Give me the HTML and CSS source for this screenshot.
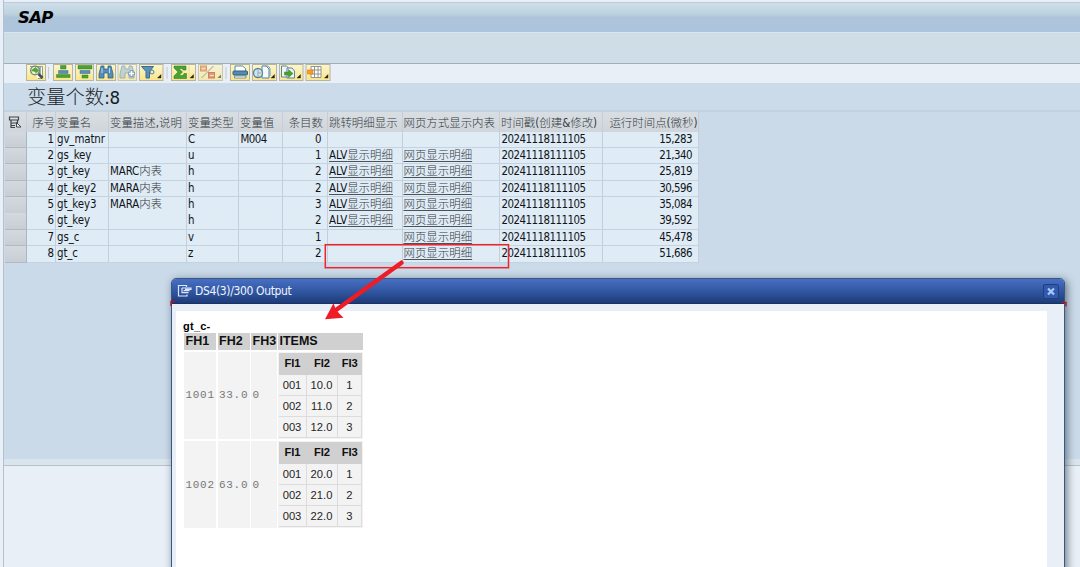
FILE: index.html
```html
<!DOCTYPE html>
<html lang="zh">
<head>
<meta charset="utf-8">
<title>SAP</title>
<link rel="stylesheet" href="styles.css">
</head>
<body>
<div class="window">
  <header class="titlebar">SAP</header>
  <div class="menubar"></div>
  <div class="toolbar">
    <svg class="icons" width="340" height="20" viewBox="0 64 340 20">
      <defs>
        <linearGradient id="btn" x1="0" y1="0" x2="0" y2="1"><stop offset="0" stop-color="#fbf6d0"/><stop offset="1" stop-color="#fae58a"/></linearGradient>
      </defs>
      <g fill="url(#btn)" stroke="#b9b49c" stroke-width="1">
        <rect x="26.5" y="64.5" width="19" height="16"/>
        <rect x="53.500" y="64.500" width="19" height="16"/>
        <rect x="75.500" y="64.500" width="18" height="16"/>
        <rect x="96.500" y="64.500" width="19" height="16"/>
        <rect x="118" y="64.500" width="18.500" height="16" opacity=".7"/>
        <rect x="139.500" y="64.500" width="23.500" height="16"/>
        <rect x="171.500" y="64.500" width="24" height="16"/>
        <rect x="198.500" y="64.500" width="24" height="16" opacity=".7"/>
        <rect x="230.500" y="64.500" width="19" height="16"/>
        <rect x="252.500" y="64.500" width="24" height="16"/>
        <rect x="279.500" y="64.500" width="23.500" height="16"/>
        <rect x="306" y="64.500" width="24" height="16"/>
      </g>
      <path d="M48.500 67v12M167 67v12M226 67v12" stroke="#c3cad0"/>
      <!-- details -->
      <path d="M30 66.500h12.500v12H38" fill="#f8fbf5" stroke="#8aa08c"/>
      <path d="M40 67v9" stroke="#9fb39c" stroke-width="2"/>
      <circle cx="35" cy="70.500" r="4.300" fill="#e8f3dc" stroke="#6d8078" stroke-width="1.300"/>
      <path d="M31.500 71c1-3 4-3 4-4l3.500 3.500-3.500 3.500v-2z" fill="#55a532"/>
      <path d="M38.500 74l4 4" stroke="#454e50" stroke-width="2.600"/>
      <!-- sort ascending and descending -->
      <path d="M60.500 65.500h5.500v3.500h-5.500zM56.500 74.500h13.500v3H56.500z" fill="#4ba22f" stroke="#34822a" stroke-width=".5"/>
      <path d="M58.500 70.500h9.500v3h-9.500z" fill="#5d8db2" stroke="#386d94" stroke-width=".5"/>
      <path d="M78 65.500h14v3.500H78zM82 75h6v3h-6z" fill="#4ba22f" stroke="#34822a" stroke-width=".5"/>
      <path d="M80 70.500h10v3H80z" fill="#5d8db2" stroke="#386d94" stroke-width=".5"/>
      <!-- find -->
      <path d="M101 66h3v3h4v-3h3l2 8v4h-5v-5h-4v5h-5v-4z" fill="#568db8" stroke="#2f658e" stroke-width=".8"/>
      <path d="M102 68v5M109.500 68v5" stroke="#b9d7e9"/>
      <g opacity=".55">
        <path d="M122 66h3v3h4v-3h3l2 8v4h-5v-5h-4v5h-5v-4z" fill="#9abdd5" stroke="#5684aa"/>
      </g>
      <path d="M131.500 70v7M128 73.500h7" stroke="#7fa3bf" stroke-width="3.500"/><path d="M131.500 71v5M129 73.500h5" stroke="#fff" stroke-width="1.500"/>
      <!-- filter -->
      <path d="M141.500 66.500h12l-4 5v6.500H146v-6.500z" fill="#5d91b8" stroke="#356b96"/>
      <circle cx="152" cy="72" r="2" fill="#f7edb0" stroke="#4f7fa5"/>
      <!-- total -->
      <path d="M174 66h12v4h-3l-1-1.500h-3l3.500 3.500-3.500 3.500h4l1-2h2.500v5H174v-2.500l4-4-4-4z" fill="#4ba22f" stroke="#34822a" stroke-width=".6"/>
      <!-- subtotal -->
      <path d="M201.500 78l12-12" stroke="#999d9a"/>
      <rect x="200.500" y="66" width="6" height="5" fill="#edb887" stroke="#d99c6c"/><rect x="208.500" y="72.500" width="6" height="5.500" fill="#e19978" stroke="#cc8260"/>
      <path d="M202 68.500h3M210 75.500h4" stroke="#f8e4c5"/>
      <!-- print -->
      <path d="M235 71v-5h7.500l3 2.500v3" fill="#fff" stroke="#5b87a8"/>
      <rect x="233" y="71" width="14.500" height="4" rx="1" fill="#568aae" stroke="#31617e"/><path d="M234.500 76h11.500v2h-11.500z" fill="#fff" stroke="#567b94" stroke-width=".8"/>
      <!-- views -->
      <path d="M262 66h4l3 3v9h-7z" fill="#f6faff" stroke="#4f81a7"/><path d="M265 66h3l2 2v8" fill="none" stroke="#74a3c3"/>
      <circle cx="258" cy="73" r="4.500" fill="#d6e3e8" stroke="#5484a2" stroke-width="1.300"/><path d="M258 69.500v7M258 73h3" stroke="#8babbd"/>
      <!-- export -->
      <path d="M281.500 66h5l2 2v9h-7z" fill="#eff5f7" stroke="#5583a4"/><path d="M287 68h5l2.500 3v7H287z" fill="#eff5f7" stroke="#5583a4"/>
      <path d="M284.500 72h4v-2.500l4.500 4-4.500 4V75h-4z" fill="#4aa22d" stroke="#30801f" stroke-width=".5"/>
      <!-- layout -->
      <path d="M311 66.500h10v11h-10zM314.500 66.500v11M318 66.500v11M311 70h10M311 74h10" fill="#fff" stroke="#858b85" stroke-width=".9"/>
      <path d="M307.500 70h5.500v4h-5.500z" fill="#ff9a1e" stroke="#df7b16" stroke-width=".6"/>
      <path d="M161 74.500v3.500h-3.500zM193.500 74.500v3.500H190zM274.500 74.500v3.500H271zM300.500 74.500v3.500H297zM328 74.500v3.500h-3.500z" fill="#25251d" stroke="#25251d" stroke-width=".4"/><path d="M221 74.500v3.500h-3.500z" fill="#77776b"/>
      <path d="M189 66v12" stroke="#e9d892"/>
    </svg>
  </div>
  <div class="heading"><span class="cjk">变量个数</span>:8</div>
  <div class="grid-area">
    <div class="alv">
      <div class="row head">
        <div class="sel"><svg width="14" height="14" viewBox="0 0 14 14"><path d="M1.500 2h9v3h-9zM3 5v7.500h4M3 8h6M3 10.500h4M9.500 5v3" fill="none" stroke="#3e454b" stroke-width="1.200"/><path d="M8.500 7.500l4.500 4.500H8.500z" fill="#f4f7fa" stroke="#3e454b"/></svg></div>
        <div class="num cjk">序号</div><div class="cjk">变量名</div><div class="cjk">变量描述<span class="lat">,</span>说明</div><div class="cjk">变量类型</div><div class="cjk">变量值</div><div class="num items cjk">条目数</div><div class="cjk">跳转明细显示</div><div class="cjk">网页方式显示内表</div><div class="cjk">时间戳<span class="lat">(</span>创建<span class="lat">&amp;</span>修改<span class="lat">)</span></div><div class="cjk num">运行时间点<span class="lat">(</span>微秒<span class="lat">)</span></div>
      </div>
      <div class="row"><div class="sel"></div><div class="num">1</div><div>gv_matnr</div><div></div><div>C</div><div class="tight">M004</div><div class="num count">0</div><div></div><div></div><div class="tight">20241118111105</div><div class="num time">15,283</div></div>
      <div class="row"><div class="sel"></div><div class="num">2</div><div>gs_key</div><div></div><div>u</div><div></div><div class="num count">1</div><div><a>ALV<span class="cjk">显示明细</span></a></div><div><a class="cjk">网页显示明细</a></div><div class="tight">20241118111105</div><div class="num time">21,340</div></div>
      <div class="row"><div class="sel"></div><div class="num">3</div><div>gt_key</div><div>MARC<span class="cjk">内表</span></div><div>h</div><div></div><div class="num count">2</div><div><a>ALV<span class="cjk">显示明细</span></a></div><div><a class="cjk">网页显示明细</a></div><div class="tight">20241118111105</div><div class="num time">25,819</div></div>
      <div class="row"><div class="sel"></div><div class="num">4</div><div>gt_key2</div><div>MARA<span class="cjk">内表</span></div><div>h</div><div></div><div class="num count">2</div><div><a>ALV<span class="cjk">显示明细</span></a></div><div><a class="cjk">网页显示明细</a></div><div class="tight">20241118111105</div><div class="num time">30,596</div></div>
      <div class="row"><div class="sel"></div><div class="num">5</div><div>gt_key3</div><div>MARA<span class="cjk">内表</span></div><div>h</div><div></div><div class="num count">3</div><div><a>ALV<span class="cjk">显示明细</span></a></div><div><a class="cjk">网页显示明细</a></div><div class="tight">20241118111105</div><div class="num time">35,084</div></div>
      <div class="row"><div class="sel"></div><div class="num">6</div><div>gt_key</div><div></div><div>h</div><div></div><div class="num count">2</div><div><a>ALV<span class="cjk">显示明细</span></a></div><div><a class="cjk">网页显示明细</a></div><div class="tight">20241118111105</div><div class="num time">39,592</div></div>
      <div class="row"><div class="sel"></div><div class="num">7</div><div>gs_c</div><div></div><div>v</div><div></div><div class="num count">1</div><div></div><div><a class="cjk">网页显示明细</a></div><div class="tight">20241118111105</div><div class="num time">45,478</div></div>
      <div class="row"><div class="sel"></div><div class="num">8</div><div>gt_c</div><div></div><div>z</div><div></div><div class="num count">2</div><div></div><div><a class="cjk">网页显示明细</a></div><div class="tight">20241118111105</div><div class="num time">51,686</div></div>
    </div>
  </div>
  <div class="splitter"></div>
  <div class="lower"></div>
</div>

<section class="dialog">
  <div class="dialog-title">
    <svg width="16" height="14" viewBox="0 0 16 14"><path d="M9.500 3V1.500H1.500v10.500H10V10.500M5 4h9v1.300H8M6.500 6.700h6M6.500 8.700h5M5 4v4.700h2" fill="none" stroke="#dbe6fb" stroke-width="1.200"/></svg>
    <span>DS4(3)/300 Output</span>
    <svg class="close" width="16" height="15" viewBox="0 0 16 15"><rect x=".5" y=".5" width="15" height="14" rx="1.500" fill="#315aad" stroke="#213f80"/><path d="M5 4.500l6 6M11 4.500l-6 6" stroke="#a9c8ff" stroke-width="2.200"/></svg>
  </div>
  <div class="dialog-page">
    <div class="caption">gt_c-</div>
    <div class="outer">
      <b>FH1</b><b>FH2</b><b>FH3</b><b>ITEMS</b>
      <div class="mono">1001</div><div class="mono">33.0</div><div class="mono">0</div>
      <div class="inner">
        <b>FI1</b><b>FI2</b><b>FI3</b>
        <i>001</i><i>10.0</i><i>1</i>
        <i>002</i><i>11.0</i><i>2</i>
        <i>003</i><i>12.0</i><i>3</i>
      </div>
      <div class="mono">1002</div><div class="mono">63.0</div><div class="mono">0</div>
      <div class="inner">
        <b>FI1</b><b>FI2</b><b>FI3</b>
        <i>001</i><i>20.0</i><i>1</i>
        <i>002</i><i>21.0</i><i>2</i>
        <i>003</i><i>22.0</i><i>3</i>
      </div>
    </div>
  </div>
</section>

<svg class="annotation" width="1080" height="567" viewBox="0 0 1080 567">
  <path d="M171 306v-4.500h4M1062 302.500h4v4" fill="none" stroke="#a81726" stroke-width="1.400"/>
  <rect x="325.300" y="244.700" width="183.200" height="23" fill="none" stroke="#ee242c" stroke-width="1.500"/>
  <path d="M401.500 262.700L336 310" stroke="#ee1c24" stroke-width="4.500" stroke-linecap="round"/>
  <path d="M325 319.200l8.500-16 2 5.500 3.500 4.500 4.500 4.500z" fill="#ee1c24"/>
</svg>
</body>
</html>
```
FILE: styles.css
```css
* { box-sizing: border-box; }

body {
  margin: 0;
  width: 1080px;
  height: 567px;
  overflow: hidden;
  position: relative;
  background: #e8eff6;
  font: 11.4px/16px "DejaVu Sans Condensed", "DejaVu Sans", "Noto Sans CJK SC", sans-serif;
  font-stretch: condensed;
  letter-spacing: -.1px;
  color: #101418;
}

.cjk {
  font-family: "Noto Sans CJK SC", sans-serif;
  font-weight: 300;
  font-size: 11.45px;
  line-height: 1;
  letter-spacing: 0;
  color: #343a40;
}

.lat {
  font-family: "DejaVu Sans Condensed", "DejaVu Sans", sans-serif;
  font-stretch: condensed;
}

.window {
  display: flex;
  flex-direction: column;
  height: 567px;
  padding-top: 2px;
  margin-left: 3px;
  border-left: 1px solid #b4c2d0;
}

.titlebar {
  height: 30px;
  padding: 0 14px;
  border-top: 1px solid #bccbda;
  background: linear-gradient(#cfdfeb, #bdd1df 38%, #adc4db 50%, #adc5dc);
  font: italic bold 16.5px/29px "DejaVu Sans", sans-serif;
  letter-spacing: -.7px;
  color: #000;
}

.menubar {
  height: 32px;
  border-top: 1px solid #dbe5ec;
  border-bottom: 1px solid #9dafbb;
  background: #cfdde7;
}

.toolbar {
  height: 19px;
  background: #e8eff6;
}

.icons {
  display: block;
  margin-left: -4px;
}

.heading {
  height: 29px;
  padding-left: 23px;
  border-bottom: 2px solid #c3d2df;
  background: #cbdbe9;
  font-size: 18.5px;
  line-height: 30px;
  letter-spacing: -.2px;
  color: #15191c;
}

.heading .cjk { font-size: 19.3px; color: #22282c; }

.grid-area {
  height: 347px;
  background: #cadae8;
}

.alv { width: 694.5px; padding-left: 1px; }

.row {
  display: grid;
  grid-template-columns: 21.5px 29.5px 53px 78px 52px 44px 45px 74.5px 97.5px 103px 95.5px;
  height: 16.375px;
}

.row > div {
  padding-left: 1px;
  border-right: 1px solid #c2d0dd;
  border-bottom: 1px solid #c5d3e0;
  background: #dfebf5;
  line-height: 15.5px;
  white-space: nowrap;
}

.row .num { text-align: right; padding-right: 1.5px; letter-spacing: -.52px; }
.row .tight { letter-spacing: -.52px; padding-left: 1.5px; }
.row .count { padding-right: 6px; }
.row .time { padding-right: 5.5px; }

.row.head { height: 19.5px; }

.row.head > div {
  border-bottom: 0;
  border-right-color: #c5ced6;
  background: linear-gradient(#d9dee3, #cfd5da);
  line-height: 20px;
}

.row.head .num { padding-right: 0; letter-spacing: 0; }
.row.head .items { padding-right: 4px; }

.row > .sel {
  border-right: 1.5px solid #a9b5c0;
  border-bottom-color: #b1bac2;
  background: linear-gradient(#d4d9df, #c9ced5);
}

.row.head > .sel { padding: 3px 0 0 3px; line-height: 0; }

.row a {
  text-decoration: underline #4b5259;
  text-underline-offset: 1.5px;
  text-decoration-thickness: 1px;
}

.splitter { height: 7px; background: #d9e4ec; border-bottom: 1px solid #b5c2ce; }

.lower { flex: 1; background: #e8eff6; }

/* The modal output window lies over the main list */
.dialog {
  position: absolute;
  left: 171px;
  top: 278px;
  width: 894px;
  height: 300px;
  padding: 0 17px 0 4px;
  border: 1px solid #395784;
  border-width: 1px 1.5px;
  border-radius: 5px 5px 0 0;
  background: #e8eff6;
  box-shadow: 2px 2px 9px rgba(30, 42, 55, .6);
}

.dialog-title {
  display: flex;
  align-items: center;
  height: 25px;
  margin: 0 -17px 7px -4px;
  padding: 0 5px;
  gap: 2px;
  border-radius: 4px 4px 0 0;
  border-bottom: 1px solid #183263;
  background: linear-gradient(#486fc3, #2f559f 55%, #1e3b78);
  color: #eff4ff;
  font-size: 12px;
  letter-spacing: -.36px;
}

.close { margin-left: auto; }

.dialog-page {
  height: 270px;
  padding: 7px 0 0 7px;
  background: #fff;
  font-family: "Liberation Sans", Arial, sans-serif;
  letter-spacing: 0;
}

.caption { height: 15px; font-size: 11px; font-weight: bold; color: #000; letter-spacing: .25px; }

.outer {
  display: grid;
  grid-template-columns: 32px 32px 25.5px 84.5px;
  grid-template-rows: 17px 87.5px 87.5px;
  column-gap: 1.5px;
  row-gap: 1.7px;
  margin-left: 1px;
}

.outer > b { padding-left: 1.5px; background: #d0d0d0; font-size: 12.5px; line-height: 17px; color: #111; }

.mono {
  display: flex;
  align-items: center;
  padding-left: 1.5px;
  background: #f3f3f3;
  font: 11px "Liberation Mono", monospace;
  letter-spacing: .7px;
  color: #777;
}

.inner {
  display: grid;
  grid-template-columns: 28px 31px 24.5px;
  grid-template-rows: 22px 21.2px 21.2px 21.2px;
  align-content: center;
  padding-left: .5px;
  background: #f3f3f3;
  font-size: 11.2px;
  line-height: 21px;
  text-align: center;
  color: #252525;
}

.inner b { background: #d0d0d0; color: #111; }
.inner i { font-style: normal; border: solid #dcdcdc; border-width: 0 1px 1px 0; }

.annotation { position: absolute; left: 0; top: 0; pointer-events: none; }
```
